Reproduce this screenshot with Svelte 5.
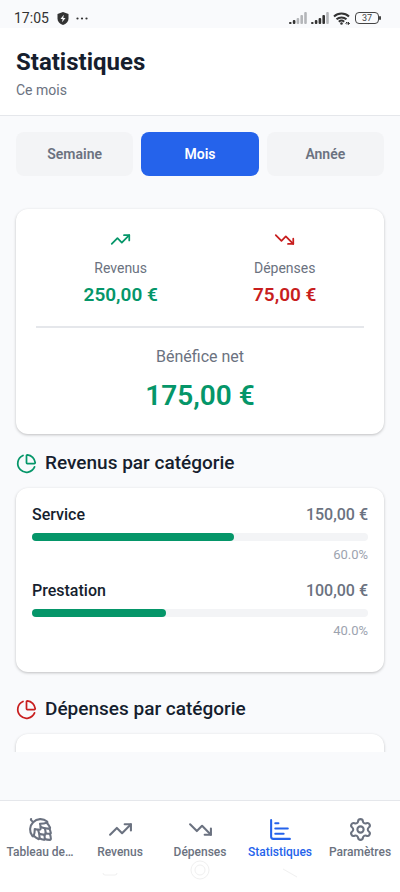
<script lang="ts">
	let period = $state('Mois');

	const periods = ['Semaine', 'Mois', 'Année'];

	const incomeCategories = [
		{ name: 'Service', amount: '150,00 €', share: 60 },
		{ name: 'Prestation', amount: '100,00 €', share: 40 }
	];

	const tabs = [
		{ label: 'Tableau de…', icon: 'hop' },
		{ label: 'Revenus', icon: 'up' },
		{ label: 'Dépenses', icon: 'down' },
		{ label: 'Statistiques', icon: 'chart' },
		{ label: 'Paramètres', icon: 'settings' }
	];

	const icons: Record<string, string[]> = {
		up: ['M22 7 13.5 15.5 8.5 10.5 2 17', 'M16 7h6v6'],
		down: ['M22 17 13.5 8.5 8.5 13.5 2 7', 'M16 17h6v-6'],
		pie: [
			'M21 12c.552 0 1.005-.449.95-.998a10 10 0 0 0-8.953-8.951c-.55-.055-.998.398-.998.95v8a1 1 0 0 0 1 1z',
			'M21.21 15.89A10 10 0 1 1 8 2.83'
		],
		chart: ['M3 3v16a2 2 0 0 0 2 2h16', 'M7 16h8', 'M7 11h12', 'M7 6h3'],
		settings: [
			'M9.671 4.136a2.34 2.34 0 0 1 4.659 0 2.34 2.34 0 0 0 3.319 1.915 2.34 2.34 0 0 1 2.33 4.033 2.34 2.34 0 0 0 0 3.831 2.34 2.34 0 0 1-2.33 4.033 2.34 2.34 0 0 0-3.319 1.915 2.34 2.34 0 0 1-4.659 0 2.34 2.34 0 0 0-3.32-1.915 2.34 2.34 0 0 1-2.33-4.033 2.34 2.34 0 0 0 0-3.831A2.34 2.34 0 0 1 6.35 6.051a2.34 2.34 0 0 0 3.319-1.915',
			'M15 12a3 3 0 1 1-6 0 3 3 0 0 1 6 0'
		],
		hop: [
			'M10.82 16.12c1.69.6 3.91.79 5.18.85.55.03 1-.42.97-.97-.06-1.27-.26-3.5-.85-5.18',
			'M11.5 6.5c1.64 0 5-.38 6.71-1.07.52-.2.55-.82.12-1.17A10 10 0 0 0 4.26 18.33c.35.43.96.4 1.17-.12.69-1.71 1.07-5.07 1.07-6.71 1.34.45 3.1.9 4.88.62a.88.88 0 0 0 .73-.74c.3-2.14-.15-3.5-.61-4.88',
			'M15.62 16.95c.2.85.62 2.76.5 4.28a.77.77 0 0 1-.9.7 16.64 16.64 0 0 1-4.08-1.36',
			'M16.13 21.05c1.65.63 3.68.84 4.87.91a.9.9 0 0 0 .96-.96 17.68 17.68 0 0 0-.9-4.87',
			'M16.94 15.62c.86.2 2.77.62 4.29.5a.77.77 0 0 0 .7-.9 16.64 16.64 0 0 0-1.36-4.08',
			'M17.99 5.52a20.82 20.82 0 0 1 3.15 4.5.8.8 0 0 1-.68 1.13c-2.33.2-5.3-.32-8.27-1.57',
			'M4.93 4.93 3 3a.7.7 0 0 1 0-1',
			'M9.58 12.18c1.24 2.98 1.77 5.95 1.57 8.28a.8.8 0 0 1-1.13.68 20.82 20.82 0 0 1-4.5-3.15'
		]
	};
</script>

{#snippet icon(name: string)}
	<svg class="icon" viewBox="0 0 24 24" aria-hidden="true">
		{#each icons[name] as d (d)}
			<path {d} />
		{/each}
	</svg>
{/snippet}

{#snippet signal(bars: number)}
	<svg class="signal" viewBox="0 0 18 12" aria-hidden="true">
		{#each [2, 4, 6, 9, 12] as height, i (height)}
			<rect x={i * 3.8} y={12 - height} width="2.6" {height} rx="1" class:off={i >= bars} />
		{/each}
	</svg>
{/snippet}

<div class="app">
	<div class="status-bar">
		<span class="clock">17:05</span>
		<svg class="shield" viewBox="0 0 12 13" aria-hidden="true">
			<path d="M6 0 11.5 2v4.5C11.5 9.6 9.3 11.9 6 13 2.7 11.9.5 9.6.5 6.5V2Z" fill="#333" />
			<path d="M6.8 2.8 3.5 7h2.1l-.5 3.2L8.5 6H6.3Z" fill="#f9fafc" />
		</svg>
		<svg class="dots" viewBox="0 0 12 3" aria-hidden="true">
			<circle cx="1.5" cy="1.5" r="1.1" />
			<circle cx="6" cy="1.5" r="1.1" />
			<circle cx="10.5" cy="1.5" r="1.1" />
		</svg>
		<div class="status-right">
			{@render signal(2)}
			{@render signal(4)}
			<svg class="wifi" viewBox="0 0 18 13" aria-hidden="true">
				<path d="M1 4.5a11 11 0 0 1 15 0M3.5 7.3a7.5 7.5 0 0 1 10 0M5.8 9.7a4.2 4.2 0 0 1 5.4 0" />
				<circle cx="8.5" cy="11.5" r="1.3" />
				<path class="arrows" d="M12.5 11.5 14 10v2.5M15.5 10v2.5l1.3-1.5" />
			</svg>
			<div class="battery"><span>37</span></div>
		</div>
	</div>

	<header>
		<h1>Statistiques</h1>
		<p>Ce mois</p>
	</header>

	<main>
		<div class="periods">
			{#each periods as p (p)}
				<button
					type="button"
					class:active={period === p}
					aria-pressed={period === p}
					onclick={() => (period = p)}>{p}</button
				>
			{/each}
		</div>

		<section class="card summary">
			<div class="totals">
				<div class="total income">
					{@render icon('up')}
					<span>Revenus</span>
					<strong>250,00 €</strong>
				</div>
				<div class="total expense">
					{@render icon('down')}
					<span>Dépenses</span>
					<strong>75,00 €</strong>
				</div>
			</div>
			<div class="net income">
				<span>Bénéfice net</span>
				<strong>175,00 €</strong>
			</div>
		</section>

		<section class="category">
			<h2 class="income">{@render icon('pie')}<span>Revenus par catégorie</span></h2>
			<div class="card rows">
				{#each incomeCategories as category (category.name)}
					<div class="row">
						<div class="row-top">
							<span>{category.name}</span>
							<span class="amount">{category.amount}</span>
						</div>
						<div class="track"><div class="fill" style:width="{category.share}%"></div></div>
						<span class="share">{category.share.toFixed(1)}%</span>
					</div>
				{/each}
			</div>
		</section>

		<section class="category">
			<h2 class="expense">{@render icon('pie')}<span>Dépenses par catégorie</span></h2>
			<div class="card rows empty"></div>
		</section>
	</main>

	<footer>
		<nav>
			{#each tabs as tab, i (tab.label)}
				<a href="#{tab.icon}" class:current={i === 3} aria-current={i === 3 ? 'page' : undefined}>
					{@render icon(tab.icon)}
					<span>{tab.label}</span>
				</a>
			{/each}
		</nav>
		<div class="system-nav">
			<svg viewBox="0 0 20 20" aria-hidden="true"><path d="M3 13q0 2 2 2h10q2 0 2-2" /></svg>
			<svg viewBox="0 0 20 20" aria-hidden="true">
				<circle cx="10" cy="10" r="9" /><circle cx="10" cy="10" r="5" />
			</svg>
			<svg viewBox="0 0 20 20" aria-hidden="true"><path d="M3 9 17 17" /></svg>
		</div>
	</footer>
</div>

<style>
	:global(body) {
		background: #f9fafc;
	}

	.app {
		display: flex;
		flex-direction: column;
		height: 100vh;
		color: #161e2e;
		font-family: Roboto, 'Liberation Sans', sans-serif;
	}

	h1,
	h2,
	p {
		margin: 0;
	}

	.icon {
		flex: none;
		width: 21px;
		height: 21px;
		fill: none;
		stroke: currentColor;
		stroke-width: 2;
		stroke-linecap: round;
		stroke-linejoin: round;
	}

	.status-bar {
		display: flex;
		align-items: center;
		flex: none;
		height: 28px;
		padding: 8px 21px 0 14px;
		box-sizing: border-box;
		color: #333;
	}

	.clock {
		font-size: 14px;
		line-height: 20px;
	}

	.shield {
		width: 12px;
		height: 13px;
		margin-left: 8px;
	}

	.dots {
		width: 12px;
		height: 3px;
		margin-left: 7px;
		fill: #333;
	}

	.status-right {
		display: flex;
		align-items: center;
		gap: 4px;
		margin-left: auto;
	}

	.signal {
		width: 18px;
		height: 12px;
		fill: #333;
	}

	.signal .off {
		fill: #b4b6b9;
	}

	.wifi {
		width: 18px;
		height: 13px;
		fill: none;
		stroke: #333;
		stroke-width: 2;
	}

	.wifi circle {
		fill: #333;
		stroke: none;
	}

	.wifi .arrows {
		stroke-width: 1;
	}

	.battery {
		position: relative;
		width: 24px;
		height: 12px;
		border: 1px solid #444;
		border-radius: 4px;
		box-sizing: border-box;
		color: #444;
		font-size: 9px;
		line-height: 10px;
		text-align: center;
	}

	.battery::after {
		content: '';
		position: absolute;
		top: 3px;
		right: -3px;
		width: 2px;
		height: 4px;
		border-radius: 1px;
		background: #444;
	}

	header {
		flex: none;
		padding: 18px 16px 15px;
		border-bottom: 1px solid #e5e7eb;
		background: #fff;
	}

	h1 {
		font-size: 24px;
		font-weight: 700;
		line-height: 32px;
	}

	header p {
		margin-top: 2px;
		color: #6b7280;
		font-size: 14px;
		line-height: 20px;
	}

	main {
		flex: 1;
		min-height: 0;
		margin-bottom: 48px;
		padding: 16px 16px 0;
		overflow: hidden;
	}

	.periods {
		display: flex;
		gap: 8px;
		margin-bottom: 33px;
	}

	.periods button {
		flex: 1;
		height: 44px;
		border: 0;
		border-radius: 8px;
		background: #f3f4f6;
		color: #6b7280;
		font: 600 14px/20px Roboto, 'Liberation Sans', sans-serif;
		cursor: pointer;
	}

	.periods button.active {
		background: #2563eb;
		color: #fff;
	}

	.card {
		border-radius: 12px;
		background: #fff;
		box-shadow: 0 1px 3px rgb(0 0 0 / 0.24);
	}

	.income {
		color: #059669;
	}

	.expense {
		color: #c81e1e;
	}

	.summary {
		padding: 20px;
	}

	.totals {
		display: flex;
		justify-content: space-around;
		padding-bottom: 19px;
		border-bottom: 2px solid #e5e7eb;
	}

	.total,
	.net {
		display: flex;
		flex-direction: column;
		align-items: center;
	}

	.total span {
		margin: 8px 0 5px;
		color: #6b7280;
		font-size: 14px;
		line-height: 20px;
	}

	.total strong {
		font-size: 19px;
		font-weight: 600;
		line-height: 24px;
	}

	.net {
		padding-top: 18px;
	}

	.net span {
		margin-bottom: 10px;
		color: #6b7280;
		font-size: 16px;
		line-height: 22px;
	}

	.net strong {
		font-size: 28px;
		font-weight: 600;
		line-height: 36px;
	}

	.category {
		margin-top: 16px;
	}

	.category + .category {
		margin-top: 24px;
	}

	h2 {
		display: flex;
		align-items: center;
		gap: 8px;
		margin-bottom: 12px;
		font-size: 19px;
		font-weight: 500;
		line-height: 26px;
	}

	h2 span {
		color: #161e2e;
	}

	.rows {
		padding: 16px;
	}

	.rows.empty {
		height: 120px;
	}

	.row {
		display: flex;
		flex-direction: column;
		margin-bottom: 16px;
	}

	.row-top {
		display: flex;
		justify-content: space-between;
		margin-bottom: 7px;
		font-size: 16px;
		font-weight: 500;
		line-height: 22px;
	}

	.amount {
		color: #6b7280;
	}

	.track {
		height: 8px;
		border-radius: 4px;
		background: #f3f4f6;
	}

	.fill {
		height: 100%;
		border-radius: 4px;
		background: #059669;
	}

	.share {
		margin-top: 5px;
		color: #9ca3af;
		font-size: 13px;
		line-height: 18px;
		text-align: right;
	}

	footer {
		flex: none;
		border-top: 1px solid #e5e7eb;
		background: #fff;
	}

	nav {
		display: flex;
		padding-top: 16px;
	}

	nav a {
		display: flex;
		flex: 1;
		flex-direction: column;
		align-items: center;
		gap: 2px;
		min-width: 0;
		padding: 0 2px;
		color: #6b7280;
		font-size: 12px;
		font-weight: 500;
		line-height: 16px;
		text-decoration: none;
	}

	nav a.current {
		color: #2563eb;
	}

	nav .icon {
		width: 25px;
		height: 25px;
	}

	nav span {
		max-width: 100%;
		white-space: nowrap;
	}

	.system-nav {
		display: flex;
		justify-content: space-between;
		padding: 0 25% 12px;
	}

	.system-nav svg {
		width: 20px;
		height: 20px;
		fill: none;
		stroke: #f0f0f0;
		stroke-width: 1;
	}
</style>
